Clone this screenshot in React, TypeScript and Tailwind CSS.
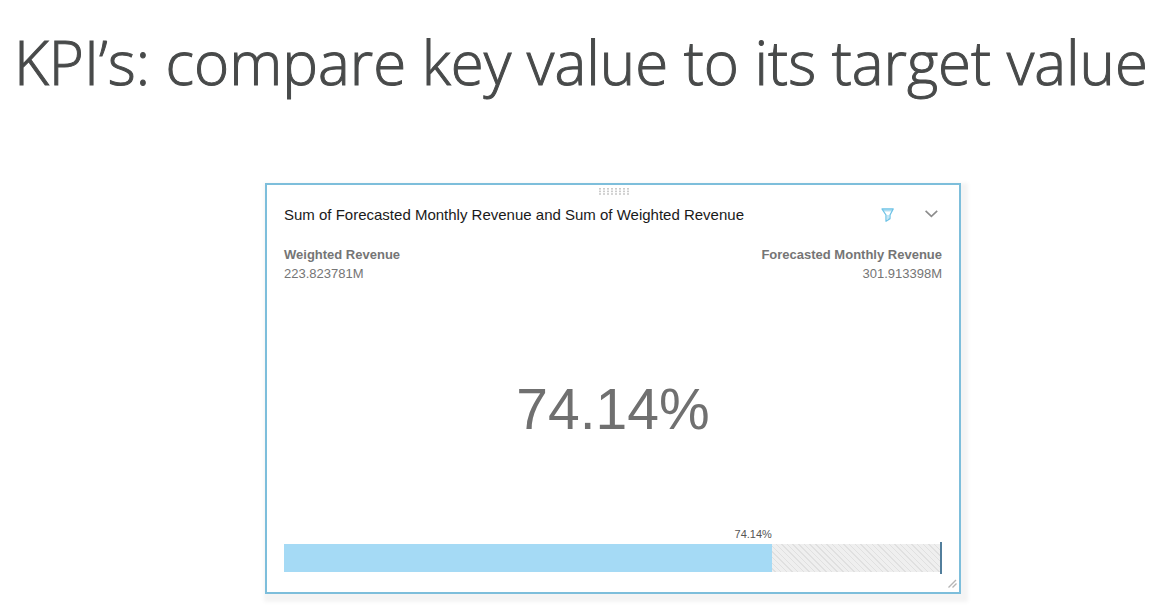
const progress = 74.14;

function DragHandle() {
  return (
    <svg width="31" height="7" viewBox="0 0 31 7" fill="#cbcbcb" aria-hidden="true">
      {[1, 5, 9, 13, 17, 21, 25, 29].map((x) =>
        [0, 2.6, 5.2].map((y) => <rect key={`${x}-${y}`} x={x} y={y} width="2" height="1.6" />),
      )}
    </svg>
  );
}

function FilterIcon() {
  return (
    <svg width="14" height="14" viewBox="0 0 14 14" fill="none" stroke="#6fc3e6" strokeWidth="1.3" strokeLinejoin="round" aria-hidden="true">
      <path d="M2 1h11.2L10 7v3.6L6 13.2V7z" />
      <path d="M3 2.8h9M8 7v4" strokeWidth="0.8" />
    </svg>
  );
}

function ChevronIcon() {
  return (
    <svg width="14" height="14" viewBox="0 0 14 14" fill="none" stroke="#8c8c8c" strokeWidth="1.6" aria-hidden="true">
      <path d="M1.6 2.8 7.4 8.4l5.8-5.6" />
    </svg>
  );
}

function Measure({ name, value, end = false }: { name: string; value: string; end?: boolean }) {
  return (
    <div className={end ? "text-right" : "text-left"}>
      <dt className="font-bold">{name}</dt>
      <dd>{value}</dd>
    </div>
  );
}

function ProgressBar() {
  return (
    <div>
      <div className="text-right text-[11px] leading-4 text-[#555]" style={{ width: `${progress}%` }}>
        {progress}%
      </div>
      <div className="flex items-center">
        <div
          role="progressbar"
          aria-label="Weighted revenue against forecast"
          aria-valuenow={progress}
          className="h-7 grow bg-[#efefef] bg-[repeating-linear-gradient(45deg,transparent_0_3px,#e0e0e0_3px_4px)]"
        >
          <div className="h-full bg-[#a5daf5]" style={{ width: `${progress}%` }} />
        </div>
        <div className="-ml-0.5 h-8 w-0.5 bg-[#527e9c]" />
      </div>
    </div>
  );
}

export default function App() {
  return (
    <main className="min-h-screen bg-white pb-3 font-['Liberation_Sans',Arial,sans-serif]">
      <h1 className="px-[14px] pt-5 font-['Open_Sans','Noto_Sans',sans-serif] text-[60px] leading-[84px] font-light text-[#484a4a] [-webkit-text-stroke:1px_#484a4a]">
        KPI’s: compare key value to its target value
      </h1>
      <section className="relative mt-[79px] mr-[206px] ml-[265px] flex flex-col border-2 border-[#7dbedb] bg-white px-[17px] pb-[18px] shadow-[3px_4px_4px_4px_#f4f4f4]">
        <div className="flex justify-center pt-[3px]">
          <DragHandle />
        </div>
        <header className="flex items-center justify-between pt-2">
          <h2 className="text-[15px] leading-6 text-[#1a1a1a]">
            Sum of Forecasted Monthly Revenue and Sum of Weighted Revenue
          </h2>
          <div className="flex gap-[30px] pr-1">
            <button type="button" aria-label="Filter">
              <FilterIcon />
            </button>
            <button type="button" aria-label="Visual options">
              <ChevronIcon />
            </button>
          </div>
        </header>
        <dl className="flex justify-between pt-[18px] text-[13px] leading-[19px] text-[#757575]">
          <Measure name="Weighted Revenue" value="223.823781M" />
          <Measure name="Forecasted Monthly Revenue" value="301.913398M" end />
        </dl>
        <p className="pt-[95px] pb-[86px] text-center text-[57px] leading-[62px] text-[#707070]">{progress}%</p>
        <ProgressBar />
        <svg className="absolute right-0.5 bottom-1" width="9" height="9" viewBox="0 0 9 9" fill="none" stroke="#b5b5b5" strokeWidth="1.4" aria-hidden="true">
          <path d="M0.5 8.5 8 1M4.5 8.5 8.5 4.5" />
        </svg>
      </section>
    </main>
  );
}
